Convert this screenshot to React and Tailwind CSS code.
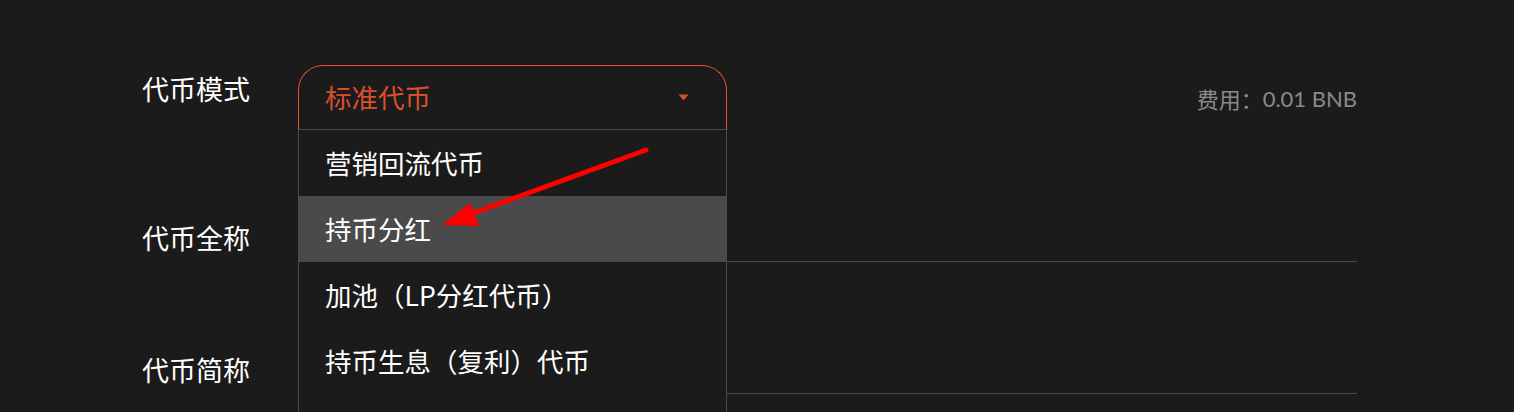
import { useState } from 'react';

const options = ['营销回流代币', '持币分红', '加池（LP分红代币）', '持币生息（复利）代币'];

export default function App() {
  const [hover] = useState(1);

  return (
    <div className="relative min-h-screen bg-[#1b1b1b] pt-[65px] pl-[142px] overflow-hidden text-white font-['Noto_Sans_CJK_SC','Noto_Sans',sans-serif]">
      <div className="w-[1215px]">
        {/* 代币模式 */}
        <div className="flex h-[65px]">
          <div className="w-[156px] shrink-0 pt-[10px] text-[27px] leading-none">代币模式</div>
          <div className="relative w-[429px] shrink-0 z-10">
            <div className="h-[65px] rounded-t-[25px] border-t border-x border-[#e4532e] border-b border-b-[#4a4a4a] flex items-center justify-between pl-[26px] pr-[37px]">
              <span className="text-[26.5px] leading-none text-[#d8502b]">标准代币</span>
              <svg width="11" height="7" viewBox="0 0 11 7">
                <path d="M0.5 0.5 H10.5 L5.5 6.5 Z" fill="#d8502b" />
              </svg>
            </div>
            {/* 下拉列表 */}
            <div className="absolute left-0 top-full w-full h-[300px] bg-[#1b1b1b] border-x border-[#4a4a4a]">
              {options.map((o, i) => (
                <div
                  key={o}
                  className={`h-[66px] flex items-center pl-[26px] text-[26.5px] leading-none ${i === hover ? 'bg-[#4a4a4a]' : ''}`}
                >
                  {o}
                </div>
              ))}
            </div>
          </div>
          <div className="flex-1 flex items-center justify-end pt-[2px] text-[22px] text-[#8a8a8a]">
            费用：<span className="font-['Lato',sans-serif] text-[22px]">0.01 BNB</span>
          </div>
        </div>

        {/* 代币全称 */}
        <div className="flex items-end h-[132px]">
          <div className="w-[156px] shrink-0 pb-[11px] text-[27px] leading-none">代币全称</div>
          <div className="flex-1 h-[66px] border-b border-[#4a4a4a]"></div>
        </div>

        {/* 代币简称 */}
        <div className="flex items-end h-[132px]">
          <div className="w-[156px] shrink-0 pb-[11px] text-[27px] leading-none">代币简称</div>
          <div className="flex-1 h-[66px] border-b border-[#4a4a4a]"></div>
        </div>
      </div>

      {/* 标注箭头 */}
      <svg className="absolute inset-0 pointer-events-none z-20" width="1514" height="412">
        <line x1="646" y1="150" x2="468" y2="215" stroke="#ff0000" strokeWidth="5" strokeLinecap="round" />
        <polygon points="442,225 470,203 479,226" fill="#ff0000" />
      </svg>
    </div>
  );
}
